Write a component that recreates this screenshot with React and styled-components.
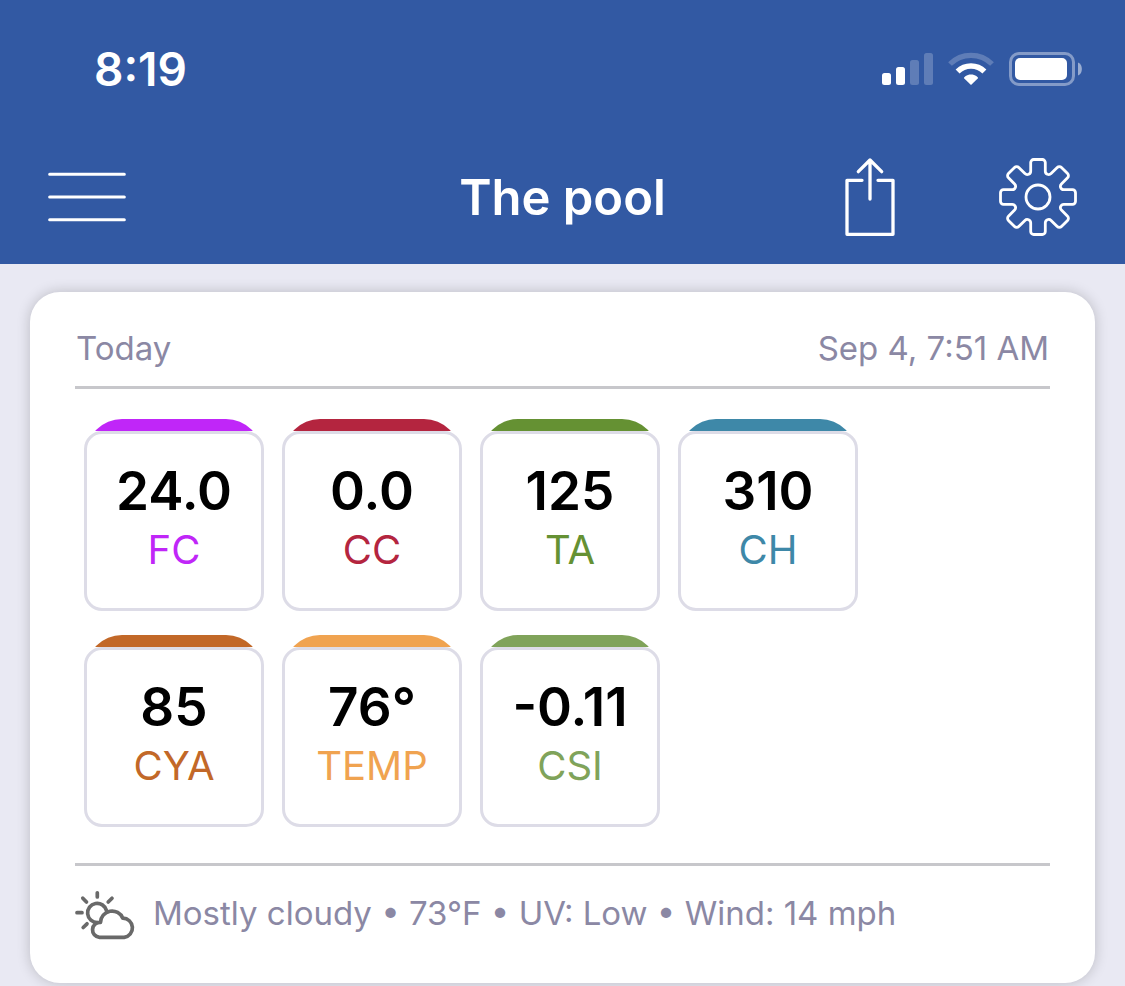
import React from 'react';
import styled, { createGlobalStyle } from 'styled-components';

const GlobalStyle = createGlobalStyle`
  * {
    box-sizing: border-box;
  }

  body {
    margin: 0;
    background-color: #e9e9f3;
    font-family: Inter, 'Liberation Sans', sans-serif;
  }
`;

const Header = styled.header`
  padding: 42px 48px 25px;
  background-color: #3259a3;
  color: white;
`;

const StatusBar = styled.div`
  display: flex;
  align-items: center;
  justify-content: space-between;
  margin-bottom: 61px;
  padding-left: 46px;
`;

const Clock = styled.time`
  font-size: 46px;
  line-height: 54px;
  font-weight: 600;
`;

const StatusIcons = styled.div`
  display: flex;
  align-items: center;
  gap: 15px;
  margin-right: -5px;

  svg {
    display: block;
  }
`;

const NavBar = styled.nav`
  display: grid;
  grid-template-columns: 1fr auto 1fr;
  align-items: start;
`;

const Title = styled.h1`
  margin: 0;
  font-size: 49px;
  line-height: 82px;
  font-weight: 600;
`;

const Actions = styled.div`
  display: flex;
  align-items: center;
  justify-content: flex-end;
  gap: 104px;
`;

const IconButton = styled.button`
  justify-self: start;
  padding: 0;
  border: none;
  background: none;
  color: inherit;
  cursor: pointer;

  svg {
    display: block;
  }
`;

const Main = styled.main`
  padding: 28px 30px;
`;

const Card = styled.article`
  padding: 36px 45px 43px;
  border-radius: 30px;
  background-color: white;
  box-shadow: 0 0 14px rgba(0, 0, 0, 0.2);
`;

const CardHeader = styled.div`
  display: flex;
  justify-content: space-between;
  padding: 0 1px 18px;
  border-bottom: 3px solid #c7c7cb;
  color: #8b88a4;
  font-size: 33px;
  line-height: 40px;
`;

const Day = styled.h2`
  margin: 0;
  font-size: inherit;
  font-weight: 400;
`;

const Readings = styled.ul`
  display: flex;
  flex-wrap: wrap;
  gap: 24px 18px;
  margin: 0;
  padding: 30px 9px 36px;
  list-style: none;
`;

const Tile = styled.li`
  width: 180px;
  color: ${(props) => props.$color};
`;

const TileCap = styled.div`
  height: 12px;
  margin: 0 2px;
  overflow: hidden;

  &::before {
    content: '';
    display: block;
    height: 36px;
    border-radius: 36px 36px 0 0;
    background-color: currentColor;
  }
`;

const TileBody = styled.div`
  padding: 26px 0 30px;
  border: 3px solid #dddce7;
  border-radius: 18px;
  text-align: center;
`;

const Value = styled.div`
  color: black;
  font-size: 53px;
  line-height: 62px;
  font-weight: 600;
`;

const Label = styled.div`
  font-size: 40px;
  line-height: 56px;
`;

const Weather = styled.footer`
  display: flex;
  align-items: flex-start;
  gap: 18px;
  padding-top: 24px;
  border-top: 3px solid #c7c7cb;
  color: #8b88a4;
  font-size: 33px;
  line-height: 46px;
`;

const readings = [
  { label: 'FC', value: '24.0', color: '#c026f8' },
  { label: 'CC', value: '0.0', color: '#b4253f' },
  { label: 'TA', value: '125', color: '#659133' },
  { label: 'CH', value: '310', color: '#3e88a8' },
  { label: 'CYA', value: '85', color: '#c26828' },
  { label: 'TEMP', value: '76°', color: '#f0a350' },
  { label: 'CSI', value: '-0.11', color: '#80a35a' },
];

const SignalIcon = () => (
  <svg width="51" height="32" viewBox="0 0 51 32" fill="currentColor">
    <rect x="0" y="20" width="9" height="12" rx="2.5" />
    <rect x="14" y="14" width="9" height="18" rx="2.5" />
    <rect x="28" y="7" width="9" height="25" rx="2.5" opacity="0.22" />
    <rect x="42" y="0" width="9" height="32" rx="2.5" opacity="0.22" />
  </svg>
);

const WifiIcon = () => (
  <svg width="46" height="34" viewBox="0 0 46 34" fill="none" stroke="currentColor">
    <path d="M2 12 A29.7 29.7 0 0 1 44 12" strokeWidth="5.3" opacity="0.22" />
    <path d="M9.6 19.6 A19 19 0 0 1 36.4 19.6" strokeWidth="5.6" />
    <path d="M23 33 L16 26.2 C15.6 25.2 18.6 22.4 23 22.4 C27.4 22.4 30.4 25.2 30 26.2 Z" fill="currentColor" stroke="none" />
  </svg>
);

const BatteryIcon = () => (
  <svg width="73" height="34" viewBox="0 0 73 34" fill="currentColor">
    <rect x="1.5" y="1.5" width="63" height="31" rx="8.5" fill="none" stroke="currentColor" strokeWidth="3" opacity="0.4" />
    <rect x="6" y="6" width="52" height="22" rx="5" />
    <path d="M69 10.5 C74.2 12.5 74.2 21.5 69 23.5 Z" opacity="0.5" />
  </svg>
);

const MenuIcon = () => (
  <svg width="78" height="80" viewBox="0 0 78 80" stroke="currentColor" strokeWidth="3.1" strokeLinecap="round">
    <path d="M1.7 17.3 H76.3 M1.7 40 H76.3 M1.7 62.8 H76.3" />
  </svg>
);

const ShareIcon = () => (
  <svg width="50" height="80" viewBox="0 0 50 80" fill="none" stroke="currentColor" strokeWidth="3.3" strokeLinecap="round" strokeLinejoin="round">
    <path d="M17 23.3 H2 V77.3 H48 V23.3 H33" />
    <path d="M25 3 V42 M13.3 14.7 L25 3 L36.7 14.7" />
  </svg>
);

// one tooth is drawn and turned eight times, with a rounded valley between
const gearPath = () => {
  const tooth = [[-7.3, -25.8], [-7.3, -34.5], [-4.3, -37.5], [4.3, -37.5], [7.3, -34.5], [7.3, -25.8]];
  let d = '';
  for (let i = 0; i < 8; i++) {
    const a = (i * Math.PI) / 4;
    const p = tooth.map(([x, y]) =>
      `${(x * Math.cos(a) - y * Math.sin(a)).toFixed(2)} ${(x * Math.sin(a) + y * Math.cos(a)).toFixed(2)}`
    );
    d += i === 0 ? `M${p[0]}` : `A3.4 3.4 0 0 0 ${p[0]}`;
    d += `L${p[1]}A3 3 0 0 1 ${p[2]}L${p[3]}A3 3 0 0 1 ${p[4]}L${p[5]}`;
  }
  return `${d}A3.4 3.4 0 0 0 -7.3 -25.8Z`;
};

const GearIcon = () => (
  <svg width="78" height="78" viewBox="-39 -39 78 78" fill="none" stroke="currentColor" strokeWidth="2.8">
    <path d={gearPath()} />
    <circle r="12" />
  </svg>
);

const CloudSunIcon = () => (
  <svg width="60" height="50" viewBox="0 0 60 50" fill="none" stroke="#696969" strokeWidth="3.7" strokeLinecap="round">
    <path d="M22.3 2.8 V7 M2 22.7 H7 M7.8 8.2 L11.5 12 M37 8.2 L33.2 12 M8.2 37.5 L12 33.8" />
    <path d="M22.5 32.5 A9.6 9.6 0 1 1 31.5 20.5" />
    <path d="M24.5 47.3 A7.4 7.4 0 0 1 25.5 32.4 A11.6 11.6 0 0 1 47.8 28.2 A9.6 9.6 0 0 1 49.2 47.3 Z" strokeLinejoin="round" />
  </svg>
);

const Reading = ({ label, value, color }) => (
  <Tile $color={color}>
    <TileCap />
    <TileBody>
      <Value>{value}</Value>
      <Label>{label}</Label>
    </TileBody>
  </Tile>
);

const App = () => {
  return (
    <>
      <GlobalStyle />
      <Header>
        <StatusBar>
          <Clock>8:19</Clock>
          <StatusIcons>
            <SignalIcon />
            <WifiIcon />
            <BatteryIcon />
          </StatusIcons>
        </StatusBar>
        <NavBar>
          <IconButton type="button" aria-label="Menu"><MenuIcon /></IconButton>
          <Title>The pool</Title>
          <Actions>
            <IconButton type="button" aria-label="Share"><ShareIcon /></IconButton>
            <IconButton type="button" aria-label="Settings"><GearIcon /></IconButton>
          </Actions>
        </NavBar>
      </Header>
      <Main>
        <Card>
          <CardHeader>
            <Day>Today</Day>
            <time>Sep 4, 7:51 AM</time>
          </CardHeader>
          <Readings>
            {readings.map((reading) => (
              <Reading key={reading.label} {...reading} />
            ))}
          </Readings>
          <Weather>
            <CloudSunIcon />
            <span>Mostly cloudy • 73°F • UV: Low • Wind: 14 mph</span>
          </Weather>
        </Card>
      </Main>
    </>
  );
};

export default App;
